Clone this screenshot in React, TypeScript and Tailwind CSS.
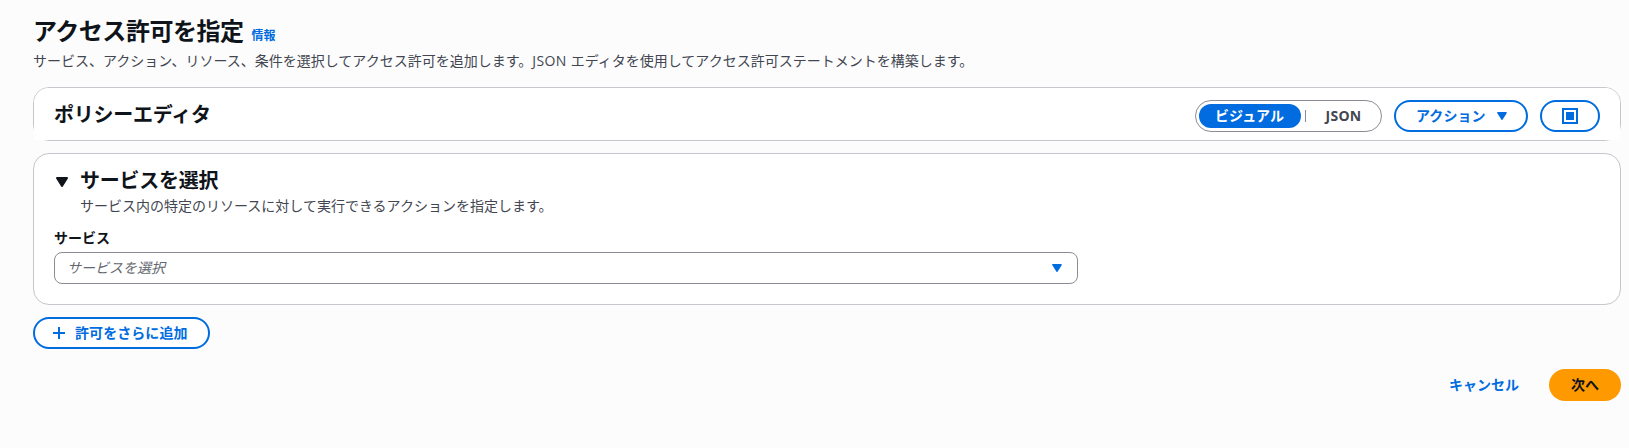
import React from "react";

function Caret({ className }: { className: string }) {
  return (
    <svg viewBox="0 0 12 10" className={className} fill="currentColor" stroke="currentColor" strokeWidth="2" strokeLinejoin="round">
      <path d="M1 1h10L6 9z" />
    </svg>
  );
}

function PageHeader() {
  return (
    <header className="h-[87px] pt-4">
      <div className="flex h-[30px] items-baseline gap-2">
        <h1 className="text-2xl leading-[30px] font-bold tracking-[-0.48px]">アクセス許可を指定</h1>
        <a className="text-xs leading-4 font-bold text-[#006ce0]">情報</a>
      </div>
      <p className="mt-[5px] text-sm leading-5 text-[#424650]">
        サービス、アクション、リソース、条件を選択してアクセス許可を追加します。
        <span className="tracking-[0.4px]">JSON </span>
        エディタを使用してアクセス許可ステートメントを構築します。
      </p>
    </header>
  );
}

function EditorBar() {
  return (
    <section className="h-[54px] rounded-2xl border border-[#c6c6cd] bg-white">
      <div className="flex h-full items-start rounded-t-[15px] bg-white px-5 pt-3">
        <h2 className="grow pt-[3px] text-xl leading-6 font-bold tracking-[-0.24px]">ポリシーエディタ</h2>
        <div className="mr-3 flex h-8 w-[187px] items-center rounded-full border border-[#8c8c94] px-[3px] text-sm font-bold tracking-[0.07px]">
          <button className="h-6 w-[102px] rounded-full bg-[#006ce0] pr-px leading-6 text-white">ビジュアル</button>
          <span className="ml-1 h-3 w-px bg-[#8c8c94]" />
          <button className="grow pl-[3px] text-center leading-6 tracking-[0.3px] text-[#424650]">JSON</button>
        </div>
        <button className="mr-3 flex h-8 w-[134px] items-center rounded-full border-2 border-[#006ce0] pl-5 text-sm font-bold tracking-[0.07px] text-[#006ce0]">
          <span className="mr-[11px]">アクション</span>
          <Caret className="h-2 w-2.5" />
        </button>
        <button className="flex h-8 w-[60px] items-center justify-center rounded-full border-2 border-[#006ce0] text-[#006ce0]">
          <svg viewBox="0 0 16 16" className="size-4">
            <path d="M1 1h14v14H1z" fill="none" stroke="currentColor" strokeWidth="2" />
            <path d="M4 4h8v8H4z" fill="currentColor" />
          </svg>
        </button>
      </div>
    </section>
  );
}

function ServicePanel() {
  return (
    <section className="mt-3 h-[152px] rounded-2xl border border-[#c6c6cd] bg-white px-5 pt-[15px]">
      <div className="flex">
        <Caret className="mt-2 mr-3 ml-0.5 h-2.5 w-3" />
        <div>
          <h2 className="text-xl leading-6 font-bold tracking-[-0.24px]">サービスを選択</h2>
          <p className="mt-[3px] text-sm leading-5 text-[#424650]">サービス内の特定のリソースに対して実行できるアクションを指定します。</p>
        </div>
      </div>
      <div className="mt-3 text-sm leading-5 font-bold">サービス</div>
      <div className="mt-1 flex h-8 w-[1024px] items-center justify-between rounded-lg border border-[#8c8c94] pr-[15px] pl-3">
        <span className="text-sm leading-5 text-[#656871] italic">サービスを選択</span>
        <Caret className="h-2 w-2.5 text-[#006ce0]" />
      </div>
    </section>
  );
}

export default function App() {
  return (
    <main lang="ja" className="h-[448px] bg-[#fcfcfd] pr-2 pl-[33px] font-['Open_Sans','Noto_Sans_CJK_JP',sans-serif] text-[#0f141a]">
      <PageHeader />
      <EditorBar />
      <ServicePanel />
      <button className="mt-3 flex h-8 w-[177px] items-center rounded-full border-2 border-[#006ce0] bg-white pl-[18px] text-sm font-bold tracking-[0.07px] text-[#006ce0]">
        <svg viewBox="0 0 12 12" className="mr-2.5 size-3" stroke="currentColor" strokeWidth="2">
          <path d="M0 6h12M6 0v12" />
        </svg>
        許可をさらに追加
      </button>
      <footer className="mt-5 flex items-center justify-end text-sm font-bold">
        <button className="mr-[30px] h-8 text-[#006ce0]">キャンセル</button>
        <button className="h-8 w-[72px] rounded-full bg-[#ff9900]">次へ</button>
      </footer>
    </main>
  );
}
